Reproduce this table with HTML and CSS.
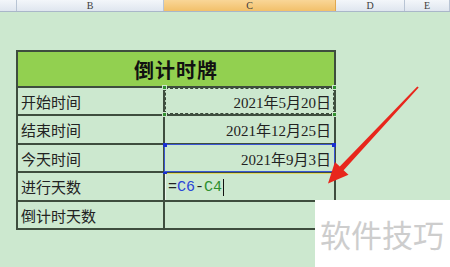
FILE: index.html
```html
<!DOCTYPE html>
<html lang="zh">
<head>
<meta charset="utf-8">
<link rel="stylesheet" href="styles.css">
</head>
<body>
<div class="sheet">
  <div class="colhead">
    <div class="ch corner"></div>
    <div class="ch colb"><span>B</span></div>
    <div class="ch colc"><span>C</span></div>
    <div class="ch cold"><span>D</span></div>
    <div class="ch cole"><span>E</span></div>
  </div>
  <div class="board">
    <div class="title">倒计时牌</div>
    <div class="lbl">开始时间</div>
    <div class="val marching">2021年5月20日<i class="sq tl"></i><i class="sq tr"></i><i class="sq bl"></i><i class="sq br"></i></div>
    <div class="lbl">结束时间</div>
    <div class="val">2021年12月25日</div>
    <div class="lbl">今天时间</div>
    <div class="val refsel">2021年9月3日<i class="bq tl"></i><i class="bq tr"></i><i class="bq bl"></i></div>
    <div class="lbl">进行天数</div>
    <div class="val editing"><span class="fx">=<b class="r1">C6</b>-<b class="r2">C4</b></span><span class="caret"></span></div>
    <div class="lbl">倒计时天数</div>
    <div class="val"></div>
  </div>
  <svg class="arrow" width="450" height="267" viewBox="0 0 450 267">
    <polygon points="417.3,86.4 418.7,87.6 343.6,170.2 348.5,174.8 328,183.5 334.9,162.0 339.8,166.6" fill="#e8261c"/>
  </svg>
  <div class="wm">软件技巧</div>
</div>
</body>
</html>
```
FILE: styles.css
```css
html, body {
  margin: 0;
  padding: 0;
}
body {
  width: 450px;
  height: 267px;
  overflow: hidden;
  background: #cce8cf;
  font-family: "Noto Sans CJK SC", "Liberation Serif", serif;
}
.sheet {
  position: relative;
  width: 450px;
  height: 267px;
}
.colhead {
  display: grid;
  grid-template-columns: 17px 147px 172px 69px 45px;
  height: 11px;
  border-bottom: 1px solid #a9b7c9;
}
.ch {
  overflow: hidden;
  border-right: 1px solid #b8c4d4;
  background: linear-gradient(#f3f6fa, #dfe6ef);
  font-family: "Liberation Serif", serif;
  font-size: 10px;
  color: #3c3c3c;
  text-align: center;
  line-height: 11px;
}
.ch span {
  display: block;
}
.colc {
  background: linear-gradient(#f9d697, #f2c06a);
  border-right-color: #e0a850;
}
.board {
  display: grid;
  grid-template-columns: 145px 169px;
  grid-template-rows: 34px 26px 27px 26px 27px 26px;
  gap: 2px;
  padding: 2px;
  width: max-content;
  margin: 38px 0 0 16px;
  background: #3e4d3e;
}
.board > div {
  background: #cce8cf;
  position: relative;
}
.title {
  grid-column: 1 / 3;
  background: #92d050 !important;
  font-weight: 700;
  font-size: 20px;
  color: #111;
  display: flex;
  align-items: center;
  justify-content: center;
  letter-spacing: 1px;
}
.lbl {
  font-size: 15px;
  color: #222;
  display: flex;
  align-items: center;
  padding-left: 3px;
}
.val {
  font-family: "Liberation Serif", "Noto Sans CJK SC", serif;
  font-size: 15px;
  color: #222;
  display: flex;
  align-items: center;
  justify-content: flex-end;
  padding-right: 3px;
}
.marching::after {
  content: "";
  position: absolute;
  inset: 0 0 0 0;
  border: 1.5px dashed #3a4a3a;
}
.sq {
  position: absolute;
  width: 3px;
  height: 3px;
  background: #2f8f2f;
  border: 1px solid #cfe6cf;
  z-index: 2;
}
.sq.tl { left: -3px; top: -3px; }
.sq.tr { right: -3px; top: -3px; }
.sq.bl { left: -3px; bottom: -3px; }
.sq.br { right: -3px; bottom: -3px; }
.refsel::after {
  content: "";
  position: absolute;
  inset: -1px;
  border: 1px solid #3a56d4;
}
.bq {
  position: absolute;
  width: 4px;
  height: 4px;
  background: #1a2fd0;
  z-index: 2;
}
.bq.tl { left: -2px; top: -2px; }
.bq.tr { right: -2px; top: -2px; }
.bq.bl { left: -2px; bottom: -3px; height: 2px; }
.editing {
  justify-content: flex-start;
  padding-left: 2px;
  border-top: 1px solid #e3d964;
  border-left: 1px solid #eef6ee;
  font-family: "Liberation Mono", monospace;
  font-size: 15px;
}
.fx b {
  font-weight: 400;
}
.r1 { color: #2a44d8; }
.r2 { color: #2e8f2e; }
.caret {
  display: inline-block;
  width: 1px;
  height: 17px;
  background: #111;
  margin-left: 1px;
}
.arrow {
  position: absolute;
  left: 0;
  top: 0;
  pointer-events: none;
}
.wm {
  position: absolute;
  left: 315px;
  top: 200px;
  width: 135px;
  height: 67px;
  background: #ffffff;
  color: #cdcdcd;
  font-size: 31px;
  line-height: 67px;
  padding-left: 5px;
  box-sizing: border-box;
  white-space: nowrap;
  letter-spacing: 0;
}
```
